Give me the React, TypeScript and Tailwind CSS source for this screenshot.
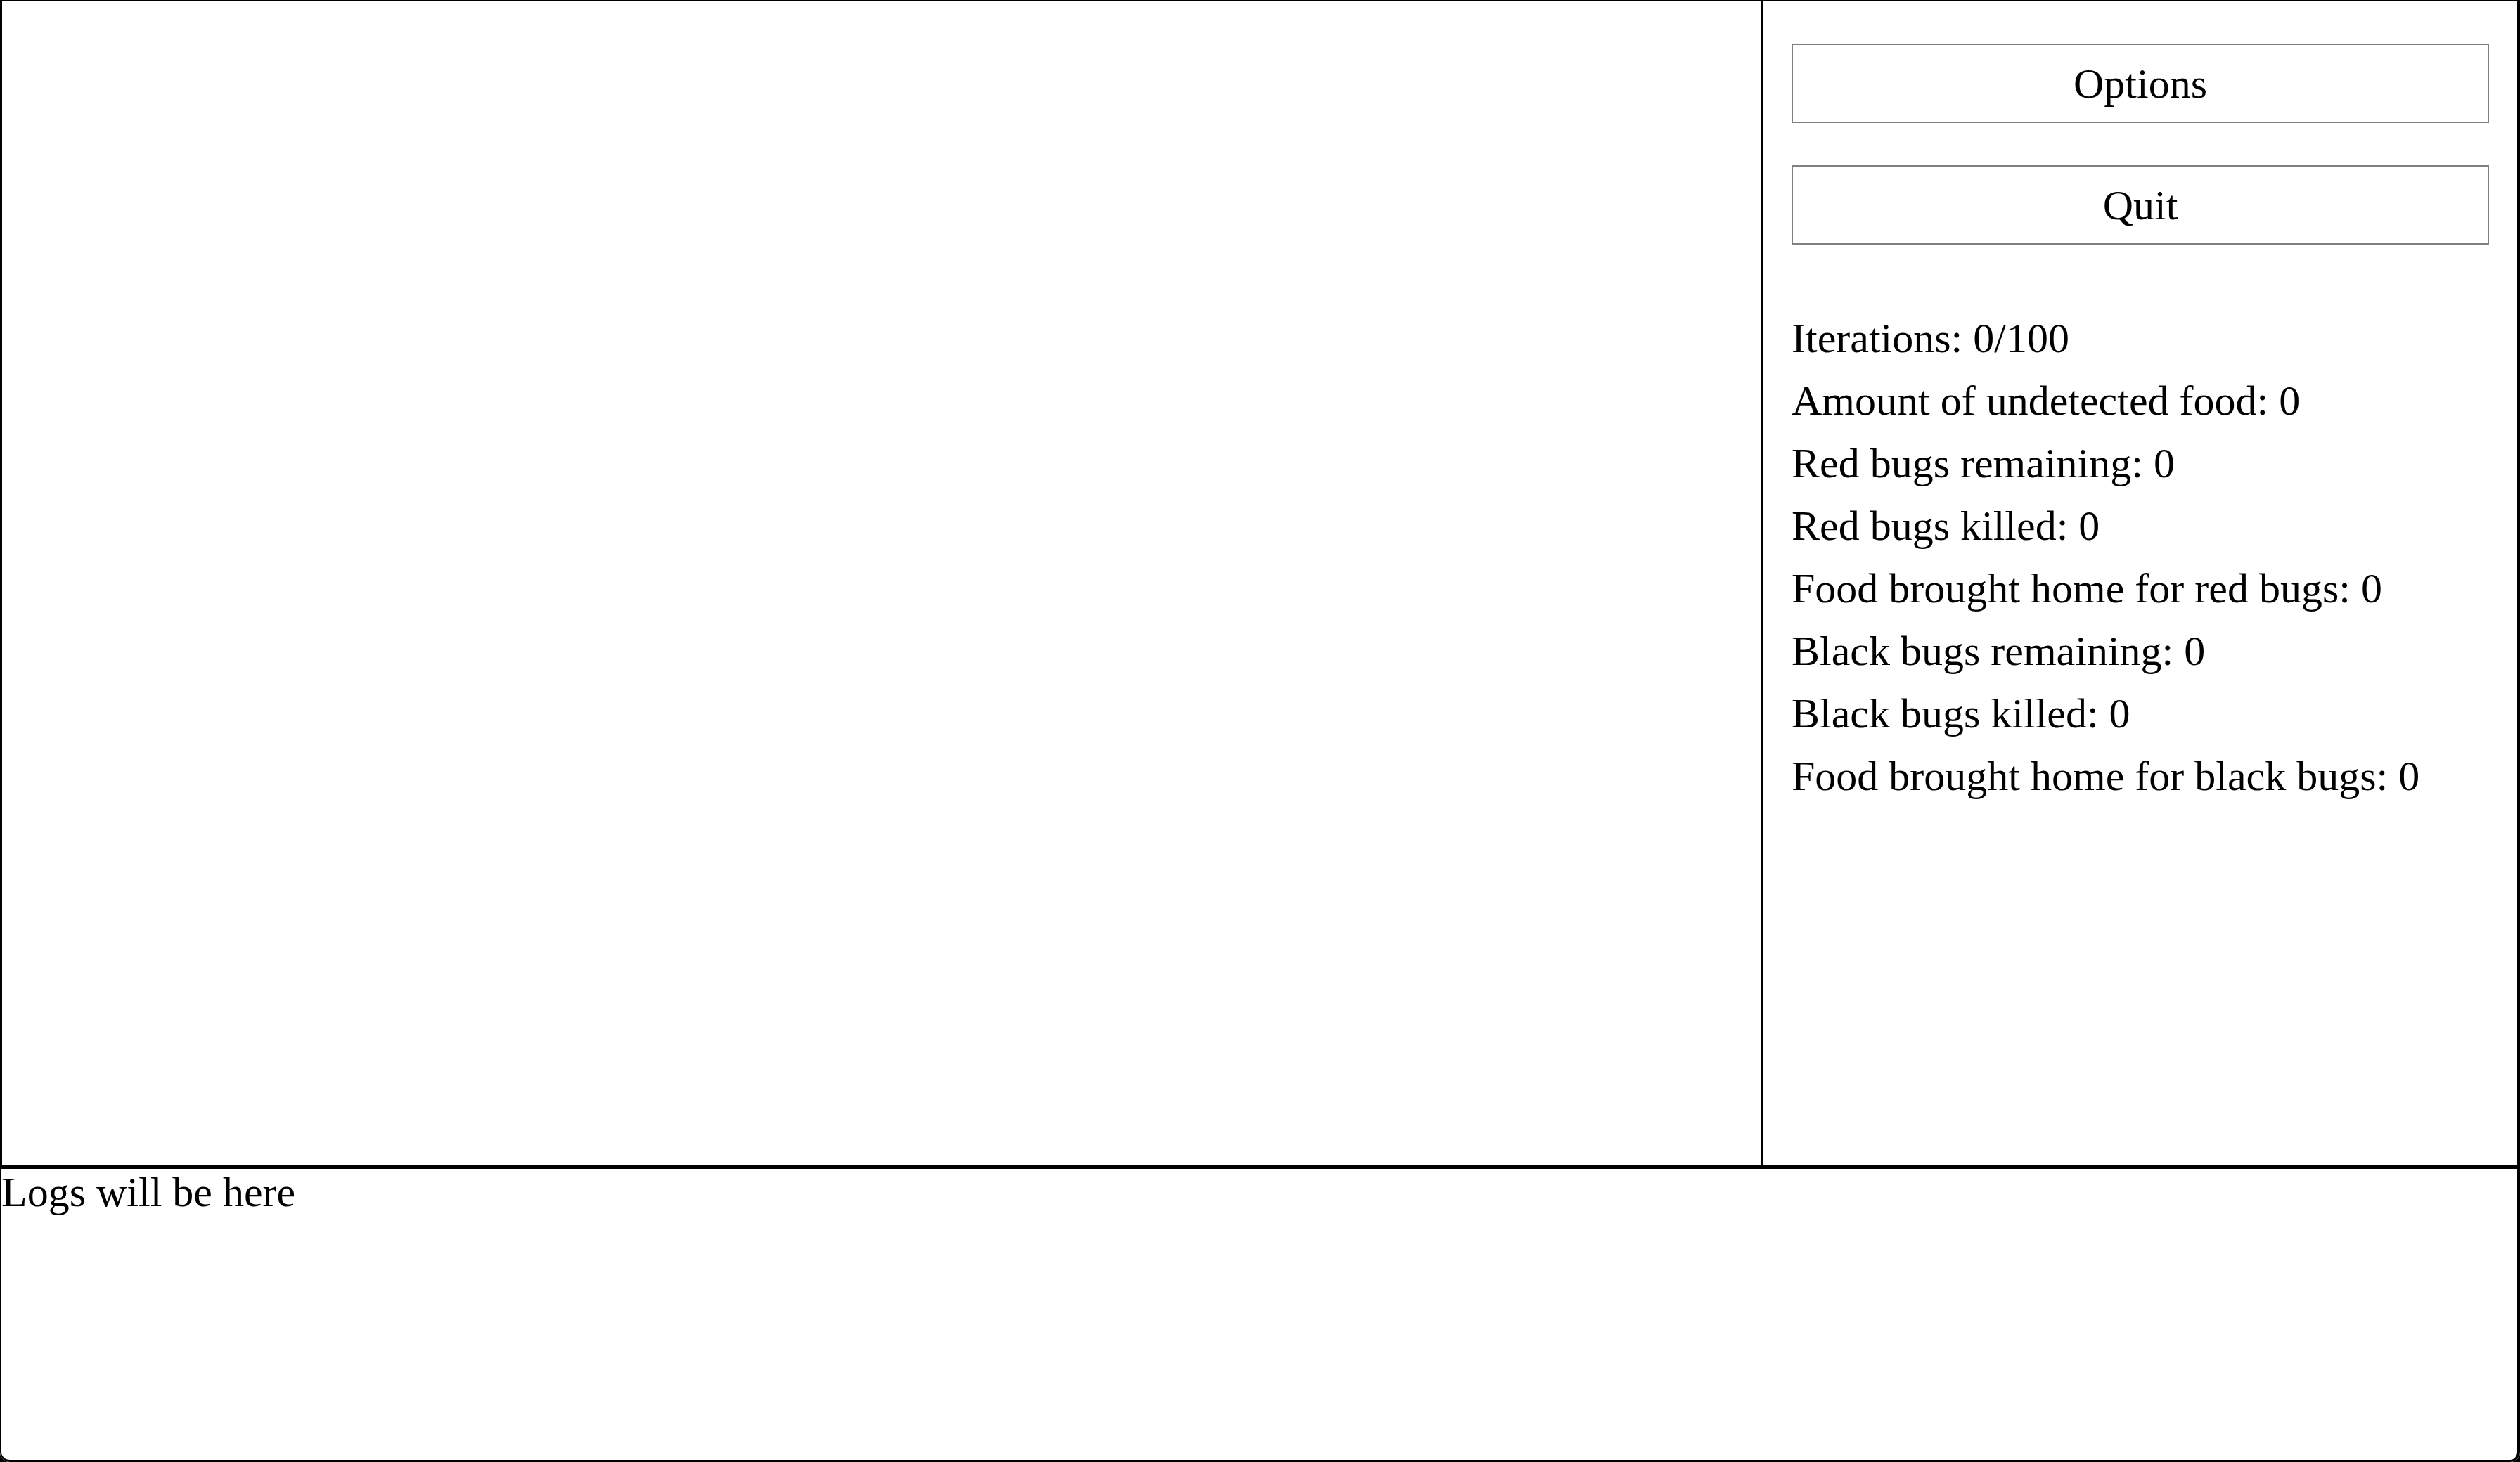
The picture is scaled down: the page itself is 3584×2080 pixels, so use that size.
/* Simulation screen: empty canvas on the left, controls + stats on the right,
 * log strip across the bottom. */

const stats = [
  'Iterations: 0/100',
  'Amount of undetected food: 0',
  'Red bugs remaining: 0',
  'Red bugs killed: 0',
  'Food brought home for red bugs: 0',
  'Black bugs remaining: 0',
  'Black bugs killed: 0',
  'Food brought home for black bugs: 0',
]

const serif = "font-['Liberation_Serif','Times_New_Roman',serif]"

export default function App() {
  return (
    <div className="h-[2080px] w-[3584px] bg-black">
      <div
        className={`flex h-full w-full flex-col overflow-hidden rounded-b-[14px] bg-white text-[60px] text-black ${serif}`}
      >
        {/* Board + side panel */}
        <div className="flex h-[1660px] shrink-0 border-t-2 border-r-4 border-b-[3px] border-l-[3px] border-black">
          <div className="flex-1" aria-label="Board" />

          <aside className="flex w-[1076px] flex-col border-l-4 border-black px-10 pt-[60px]">
            <button className="flex h-[113px] w-full items-center justify-center border-2 border-[#808080] bg-white leading-normal">
              Options
            </button>
            <button className="mt-[60px] flex h-[113px] w-full items-center justify-center border-2 border-[#808080] bg-white leading-normal">
              Quit
            </button>

            <div className="mt-[89px] leading-[89px]">
              {stats.map((s) => (
                <div key={s} className="whitespace-nowrap">
                  {s}
                </div>
              ))}
            </div>
          </aside>
        </div>

        {/* Logs */}
        <div className="flex-1 rounded-b-[14px] border-t-[3px] border-r-4 border-b-[3px] border-l-2 border-black leading-[66px]">
          Logs will be here
        </div>
      </div>
    </div>
  )
}
